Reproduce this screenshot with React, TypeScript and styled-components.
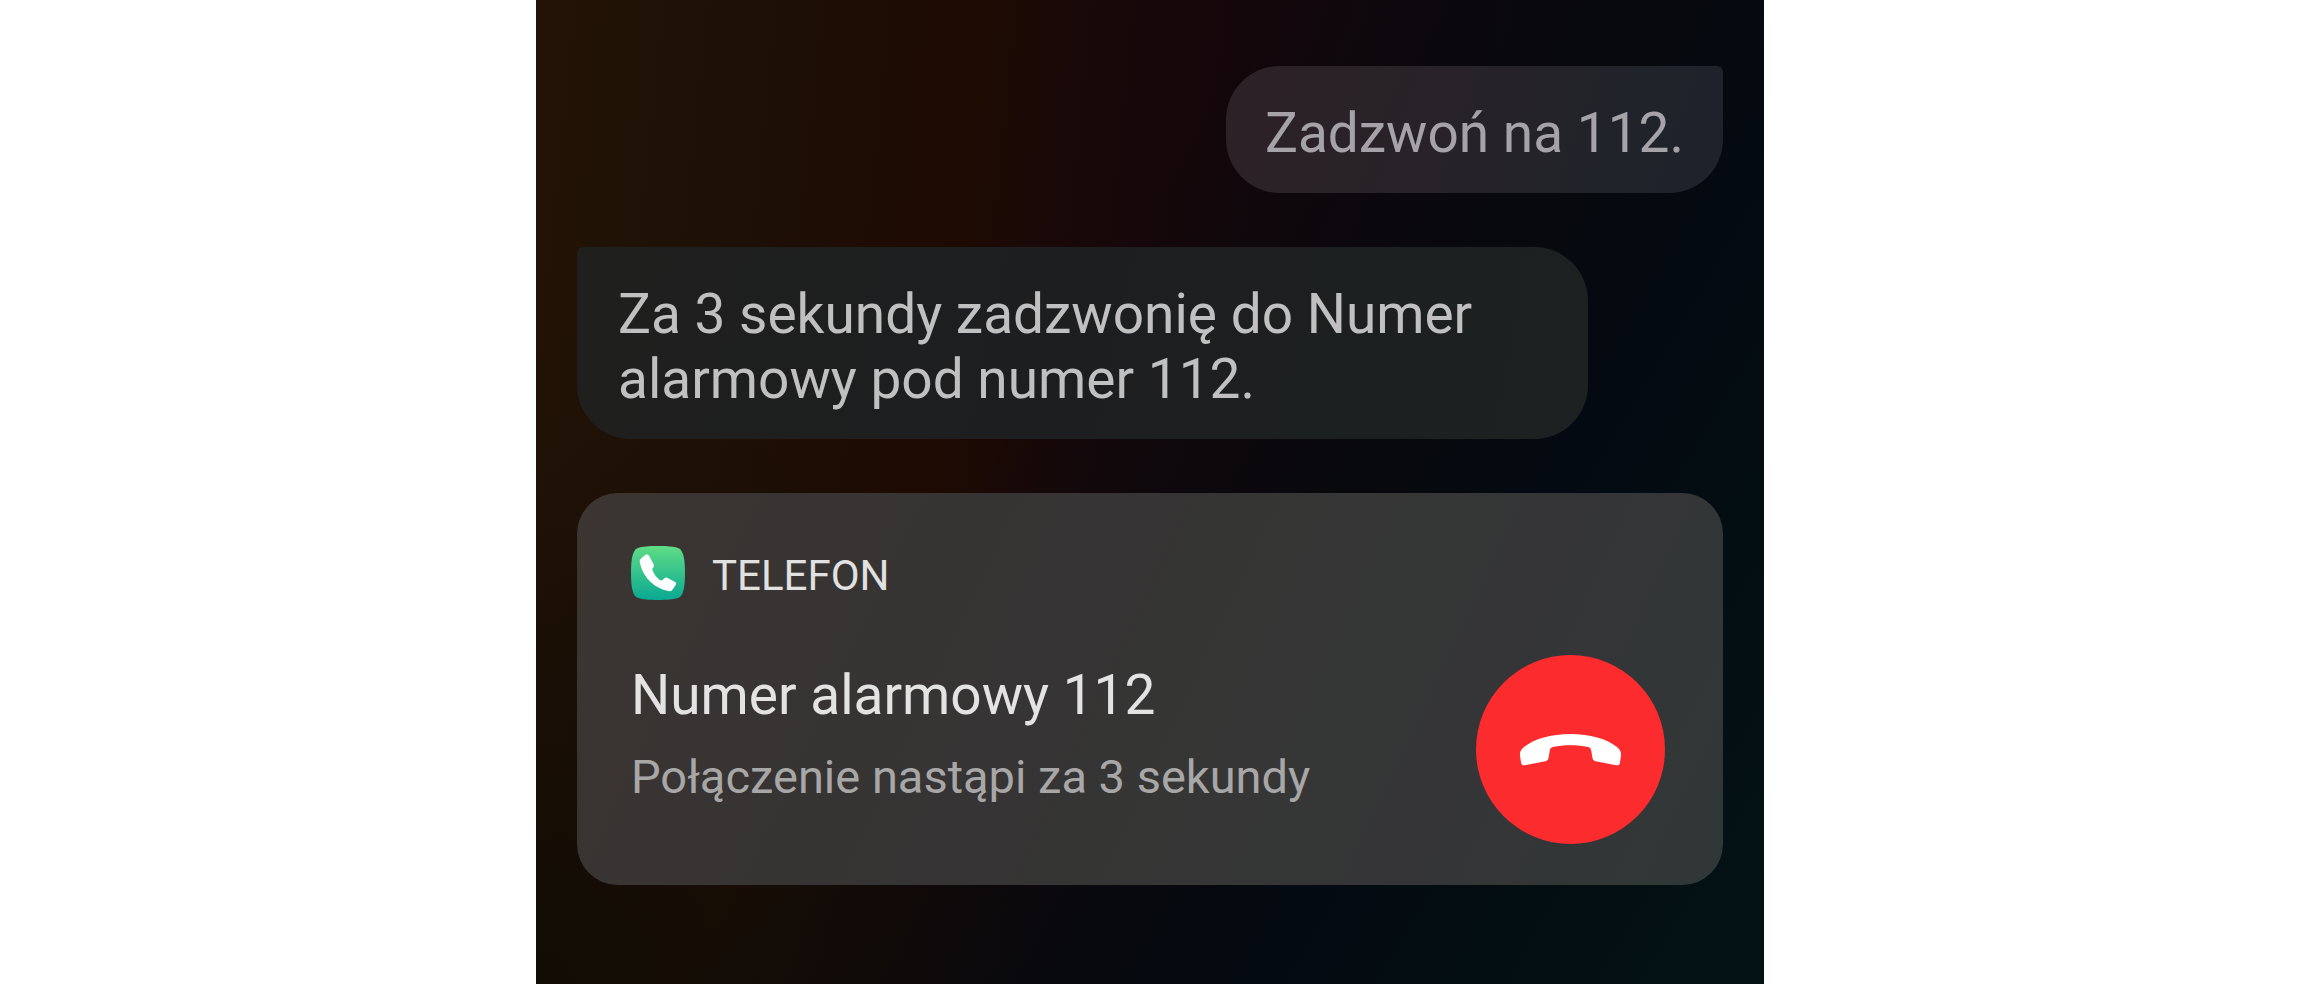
import React from "react";
import styled, { createGlobalStyle } from "styled-components";

const GlobalStyle = createGlobalStyle`
  *, *::before, *::after {
    box-sizing: border-box;
  }

  body {
    margin: 0;
    background: #ffffff;
    font-family: Roboto, "Noto Sans", sans-serif;
    font-weight: 400;
  }

  h2, p {
    margin: 0;
    font-weight: inherit;
  }
`;

const Screen = styled.main`
  display: flex;
  flex-direction: column;
  gap: 54px;
  width: 100%;
  max-width: 1228px;
  min-height: 100vh;
  margin: 0 auto;
  padding: 66px 41px;
  background:
    linear-gradient(
      121deg,
      #08090d00 40%,
      #08090d 61%,
      #040a12 72%,
      #030e12 84%,
      #041216 100%
    ),
    radial-gradient(ellipse 50% 60% at 0% 100%, #120c05 0%, #120c0500 100%),
    linear-gradient(
      96deg,
      #231306 0%,
      #1e1006 16%,
      #1d0a03 34%,
      #17080a 44%,
      #13060b 56%,
      #0f070e 68%,
      #08090f 84%,
      #08090f 100%
    );
`;

const Bubble = styled.p<{ $from: "user" | "assistant" }>`
  align-self: ${({ $from }) => ($from === "user" ? "flex-end" : "flex-start")};
  max-width: 1011px;
  padding: ${({ $from }) =>
    $from === "user" ? "35px 39px 27px" : "35px 41px 27px"};
  border-radius: ${({ $from }) =>
    $from === "user" ? "54px 6px 54px 54px" : "6px 54px 54px 54px"};
  background: ${({ $from }) =>
    $from === "user"
      ? "linear-gradient(110deg, #2d2127 0%, #262328 50%, #1e232b 90%)"
      : "linear-gradient(102deg, #1f1f1e 0%, #1d1e20 50%, #1c2121 100%)"};
  color: ${({ $from }) => ($from === "user" ? "#a5a3a7" : "#c0c0c1")};
  font-size: 55px;
  line-height: 65px;
`;

const Card = styled.section`
  display: flex;
  flex-direction: column;
  gap: 55px;
  padding: 53px 58px 41px 54px;
  border-radius: 41px;
  background: linear-gradient(
    115deg,
    #3c3532 0%,
    #373433 20%,
    #363434 40%,
    #353635 60%,
    #353537 76%,
    #303737 100%
  );
`;

const CardHeader = styled.header`
  display: flex;
  align-items: center;
  gap: 27px;
`;

const AppIcon = styled.svg`
  flex: none;
  width: 54px;
  height: 54px;
`;

const AppName = styled.h2`
  padding-top: 6px;
  color: #e2e1e1;
  font-size: 42px;
  line-height: 48px;
`;

const CardBody = styled.div`
  display: flex;
  align-items: flex-start;
  justify-content: space-between;
  gap: 41px;
`;

const CallInfo = styled.div`
  display: flex;
  flex-direction: column;
  gap: 21px;
  padding-top: 8px;
`;

const ContactName = styled.p`
  color: #e4e3e3;
  font-size: 55px;
  line-height: 65px;
`;

const CallStatus = styled.p`
  color: #a8a7a7;
  font-size: 47px;
  line-height: 55px;
`;

const HangUpButton = styled.button`
  flex: none;
  width: 189px;
  height: 189px;
  padding: 0;
  border: 0;
  border-radius: 50%;
  background: #fc2b2d;
  color: #ffffff;
  cursor: pointer;

  svg {
    display: block;
    width: 100%;
    height: 100%;
  }
`;

function PhoneAppIcon() {
  return (
    <AppIcon viewBox="0 0 54 54" aria-hidden="true">
      <defs>
        <linearGradient id="phone-app" x1="0" y1="0" x2="0" y2="1">
          <stop offset="0" stopColor="#60dd86" />
          <stop offset="1" stopColor="#0aa893" />
        </linearGradient>
      </defs>
      <path
        fill="url(#phone-app)"
        d="M27 0C36 0 43 .4 47.500 2.200 52 4.500 54 11 54 27S52 49.500 47.500 51.800C43 53.600 36 54 27 54S11 53.600 6.500 51.800C2 49.500 0 43 0 27S2 4.500 6.500 2.200C11 .4 18 0 27 0Z"
      />
      <path
        fill="#ffffff"
        d="M13.6 9.4 9.8 12.8C8.6 14 8.5 15.6 9 17.4c2 7.6 5.400 13.600 10.600 18.600 5 4.800 11.200 7.600 17.800 9 1.600.400 3 .200 3.900-1l3.400-5c.7-1.100.5-2.200-.6-2.900l-7.500-4.200c-1-.6-2.200-.4-3.200.4l-1.700 1.500c-1 .8-2.100.9-3.200 0-3.200-2.700-5.500-5.800-7-9.500-.4-1.200 0-2 .8-2.900.8-.9.900-1.800.4-2.900L18.200 10.100C17.300 8.500 15 8.100 13.600 9.400Z"
      />
    </AppIcon>
  );
}

function HangUpIcon() {
  return (
    <svg viewBox="0 0 189 189" aria-hidden="true">
      <path
        fill="currentColor"
        d="M94.500 79C75 79 58 84 48 92c-3.200 2.600-4.400 5-4 8.500l1 7c.4 2.400 1.800 3.200 4 2.700l20.500-4c1.800-.4 2.700-1.400 3-3.200l1.300-7.500c.3-1.900 1.200-2.900 3-3.400 10.500-2.600 25-2.600 35.400 0 1.800.5 2.700 1.500 3 3.400l1.300 7.500c.3 1.800 1.200 2.800 3 3.200l20.500 4c2.200.5 3.600-.3 4-2.700l1-7c.4-3.500-.8-5.900-4-8.500C131 84 114 79 94.500 79Z"
      />
    </svg>
  );
}

export default function App() {
  return (
    <>
      <GlobalStyle />
      <Screen lang="pl">
        <Bubble $from="user">Zadzwoń na 112.</Bubble>
        <Bubble $from="assistant">
          Za 3 sekundy zadzwonię do Numer alarmowy pod numer 112.
        </Bubble>
        <Card>
          <CardHeader>
            <PhoneAppIcon />
            <AppName>TELEFON</AppName>
          </CardHeader>
          <CardBody>
            <CallInfo>
              <ContactName>Numer alarmowy 112</ContactName>
              <CallStatus>Połączenie nastąpi za 3 sekundy</CallStatus>
            </CallInfo>
            <HangUpButton type="button" aria-label="Rozłącz">
              <HangUpIcon />
            </HangUpButton>
          </CardBody>
        </Card>
      </Screen>
    </>
  );
}
